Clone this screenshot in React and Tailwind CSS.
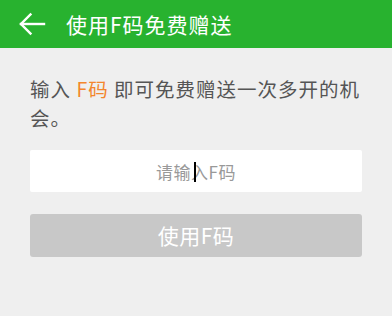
import React from "react";

export default function App() {
  const font = { fontFamily: '"Noto Sans CJK SC", "Noto Sans", Roboto, sans-serif' };
  return (
    <div className="w-[392px] h-[316px] bg-[#efefef] flex flex-col" style={font}>
      <div className="h-[48px] bg-[#28b22f] flex items-center shrink-0">
        <svg className="ml-[18px]" width="28" height="24" viewBox="0 0 28 24" fill="none" stroke="white" strokeWidth="2.4" strokeLinecap="square">
          <path d="M3 12 H26" />
          <path d="M12.5 2.5 L3 12 L12.5 21.5" />
        </svg>
        <span className="ml-[20px] text-white text-[21px] leading-none tracking-[1px]">使用F码免费赠送</span>
      </div>
      <div className="px-[30px] pt-[26px]">
        <p className="text-[19.5px] leading-[29px] text-[#555555] tracking-[1px]">
          输入 <span className="text-[#f3862c]">F码</span> 即可免费赠送一次多开的机会。
        </p>
        <div className="relative mt-[18px] h-[42px] bg-white rounded-[2px] flex items-center justify-center">
          <span className="text-[17px] text-[#999999] leading-none tracking-[0.5px]">请输入F码</span>
          <div className="absolute left-1/2 top-[12px] w-[1.5px] h-[20px] bg-black -translate-x-[2px]" />
        </div>
        <div className="mt-[22px] h-[43px] bg-[#c8c8c8] rounded-[3px] flex items-center justify-center">
          <span className="text-[21px] text-white leading-none tracking-[0.5px]">使用F码</span>
        </div>
      </div>
    </div>
  );
}
